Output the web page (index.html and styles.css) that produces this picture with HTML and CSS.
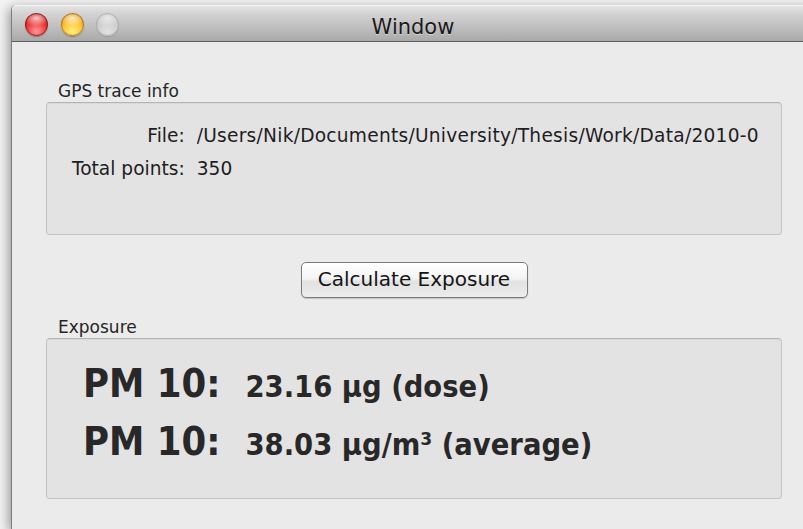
FILE: index.html
```html
<!DOCTYPE html>
<html lang="en">
<head>
<meta charset="utf-8">
<title>Window</title>
<link rel="stylesheet" href="styles.css">
</head>
<body>
<div class="window">
  <header class="titlebar">
    <div class="lights">
      <span class="light close"></span>
      <span class="light minimize"></span>
      <span class="light zoom"></span>
    </div>
    <div class="title">Window</div>
    <div class="spacer"></div>
  </header>
  <main class="content">
    <section class="group">
      <div class="group-label">GPS trace info</div>
      <div class="group-box info-box">
        <div class="info-grid">
          <span class="key">File:</span>
          <span class="val path">/Users/Nik/Documents/University/Thesis/Work/Data/2010-0</span>
          <span class="key">Total points:</span>
          <span class="val">350</span>
        </div>
      </div>
    </section>
    <div class="actions">
      <button class="push-button" type="button">Calculate Exposure</button>
    </div>
    <section class="group">
      <div class="group-label">Exposure</div>
      <div class="group-box exposure-box">
        <div class="reading"><span class="pollutant">PM 10:</span><span class="amount">23.16 µg (dose)</span></div>
        <div class="reading"><span class="pollutant">PM 10:</span><span class="amount">38.03 µg/m³ (average)</span></div>
      </div>
    </section>
  </main>
</div>
</body>
</html>
```
FILE: styles.css
```css
html, body {
  margin: 0;
  height: 100%;
  overflow: hidden;
}

body {
  background: #f3f3f3;
  font-family: "DejaVu Sans", "Liberation Sans", sans-serif;
  color: #1e1e1e;
}

.window {
  margin: 5px 0 0 11px;
  width: 802px;
  height: 524px;
  background: #ebebeb;
  border-left: 1px solid #7d7d7d;
  border-top-left-radius: 5px;
  box-shadow: -2px 3px 12px rgba(0, 0, 0, 0.4);
}

/* title bar */
.titlebar {
  display: grid;
  grid-template-columns: 1fr auto 1fr;
  align-items: start;
  height: 36px;
  border-bottom: 1px solid #5e5e5e;
  border-top-left-radius: 5px;
  background: linear-gradient(#e6e6e6 0%, #d2d2d2 25%, #bababa 70%, #a9a9a9 100%);
  box-shadow: inset 0 1px 0 #f6f6f6;
}

.lights {
  display: flex;
  gap: 12.5px;
  padding: 8px 0 0 13px;
}

.light {
  width: 23px;
  height: 23px;
  border-radius: 50%;
  box-sizing: border-box;
}

.light.close {
  background:
    radial-gradient(ellipse 60% 35% at 50% 22%, rgba(255,255,255,0.75), rgba(255,255,255,0) 100%),
    radial-gradient(circle at 50% 80%, #ff9a9a 0%, #f03a3a 45%, #b80d0d 80%, #8a0505 100%);
  box-shadow: 0 1px 1px rgba(0,0,0,0.25), inset 0 0 0 1px rgba(110,0,0,0.55);
}

.light.minimize {
  background:
    radial-gradient(ellipse 60% 35% at 50% 22%, rgba(255,255,255,0.75), rgba(255,255,255,0) 100%),
    radial-gradient(circle at 50% 80%, #fff08a 0%, #ffc531 45%, #dd8a07 80%, #a86200 100%);
  box-shadow: 0 1px 1px rgba(0,0,0,0.25), inset 0 0 0 1px rgba(140,80,0,0.55);
}

.light.zoom {
  background:
    radial-gradient(ellipse 60% 35% at 50% 22%, rgba(255,255,255,0.6), rgba(255,255,255,0) 100%),
    radial-gradient(circle at 50% 80%, #e2e2e2 0%, #cdcdcd 50%, #b9b9b9 100%);
  box-shadow: 0 1px 1px rgba(0,0,0,0.12), inset 0 0 0 1px rgba(0,0,0,0.15);
}

.title {
  font-size: 21px;
  line-height: 28px;
  padding-top: 8px;
  color: #1a1a1a;
  text-shadow: 0 1px 0 rgba(255,255,255,0.45);
}

/* window body */
.content {
  padding: 0 32px 0 34px;
}

.group-label {
  font-size: 17px;
  line-height: 20px;
  padding: 39px 0 0 12px;
  color: #262626;
}

.group-box {
  margin-top: 1px;
  background: #e3e3e3;
  border: 1px solid #c4c4c4;
  border-top-color: #b4b4b4;
  border-radius: 4px;
  box-shadow: inset 0 1px 1px rgba(0,0,0,0.05);
}

.info-box {
  height: 115px;
  padding: 16px 0 0 25px;
  overflow: hidden;
}

.info-grid {
  display: grid;
  grid-template-columns: max-content 1fr;
  column-gap: 12px;
  font-size: 18.6px;
  line-height: 33px;
  white-space: nowrap;
}

.key {
  text-align: right;
}

.val {
  overflow: hidden;
}

.path {
  letter-spacing: 0.25px;
}

/* button row */
.actions {
  display: flex;
  justify-content: center;
  padding-top: 27px;
}

.push-button {
  width: 227px;
  height: 36px;
  padding: 0 0 2px;
  font-family: "DejaVu Sans", "Liberation Sans", sans-serif;
  font-size: 20px;
  color: #141414;
  background: linear-gradient(#ffffff 0%, #f4f4f4 45%, #e2e2e2 55%, #ececec 100%);
  border: 1px solid #7b7b7b;
  border-radius: 5px;
  box-shadow: 0 1px 1px rgba(0,0,0,0.18);
}

.actions + .group .group-label {
  padding-top: 19px;
}

.exposure-box {
  height: 144px;
  padding: 15px 0 0 36px;
}

.reading {
  display: flex;
  align-items: baseline;
  gap: 25px;
  height: 58px;
  line-height: 58px;
  color: #282828;
}

.pollutant {
  font-family: "DejaVu Sans Condensed", "DejaVu Sans", sans-serif;
  font-stretch: condensed;
  font-weight: bold;
  font-size: 39.5px;
}

.amount {
  font-family: "DejaVu Sans Condensed", "DejaVu Sans", sans-serif;
  font-stretch: condensed;
  font-weight: bold;
  font-size: 30.5px;
  line-height: 1;
}
```
